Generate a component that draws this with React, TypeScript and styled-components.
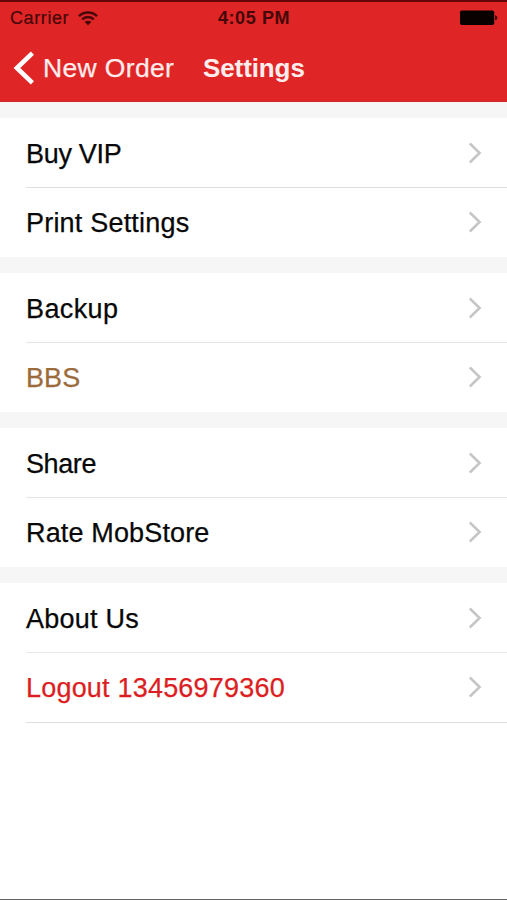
import React from "react";
import styled, { createGlobalStyle } from "styled-components";

const GlobalStyle = createGlobalStyle`
  html, body { margin: 0; padding: 0; background: #fff; }
  * { box-sizing: border-box; }
`;

const Screen = styled.div`
  width: 100%;
  height: 900px;
  display: flex;
  flex-direction: column;
  background: #fff;
  border-bottom: 1px solid #626262;
  font-family: "Liberation Sans", Arial, Helvetica, sans-serif;
  overflow: hidden;
`;

const Header = styled.header`
  flex: none;
  height: 102px;
  background: #df2526;
  border-top: 2px solid #650508;
  border-bottom: 1px solid #cf2829;
`;

const StatusBar = styled.div`
  display: grid;
  grid-template-columns: 1fr auto 1fr;
  align-items: center;
  height: 32px;
  padding: 0 9px 0 10px;
  color: #460709;
  font-size: 18px;
  line-height: 32px;
`;

const Carrier = styled.div`
  display: flex;
  align-items: center;
  gap: 9px;
  letter-spacing: 0.6px;
  -webkit-text-stroke: 0.2px currentColor;
`;

const Clock = styled.time`
  font-weight: 700;
  font-size: 18px;
  letter-spacing: 0.6px;
`;

const BatterySlot = styled.div`
  display: flex;
  justify-content: flex-end;
`;

const NavBar = styled.nav`
  display: flex;
  align-items: center;
  height: 67px;
  padding-left: 13px;
  color: #ffecec;
`;

const BackLink = styled.a`
  display: flex;
  align-items: center;
  gap: 8px;
  width: 190px;
  font-size: 26.5px;
  line-height: 34px;
  letter-spacing: 0.35px;
  -webkit-text-stroke: 0.25px currentColor;
`;

const Title = styled.h1`
  margin: 0;
  font-size: 26px;
  line-height: 34px;
  font-weight: 700;
  letter-spacing: -0.1px;
`;

const Section = styled.section`
  flex: none;
  border-top: 16px solid #f6f6f6;
`;

const Row = styled.div<{ $height: number; $divider?: string }>`
  height: ${(p) => p.$height}px;
  margin-left: 26px;
  padding: 0 25px 0 0;
  display: flex;
  align-items: center;
  justify-content: space-between;
  border-bottom: ${(p) => (p.$divider ? `1px solid ${p.$divider}` : "none")};

  &:first-child > span {
    padding-top: 2px;
  }
  &:last-child > svg {
    margin-bottom: 2px;
  }
`;

const Label = styled.span<{ $color: string; $spacing: number }>`
  color: ${(p) => p.$color};
  font-size: 27px;
  line-height: 34px;
  letter-spacing: ${(p) => p.$spacing}px;
  white-space: nowrap;
  -webkit-text-stroke: 0.25px currentColor;
`;

const Icon = styled.svg`
  display: block;
  flex: none;
`;

const WifiIcon = () => (
  <Icon width="20" height="15" viewBox="0 0 20 15" fill="none" stroke="#460709">
    <path d="M1 5.2C6 .4 14 .4 19 5.2" strokeWidth="2.5" />
    <path d="M4.2 8.4C7.5 5.2 12.5 5.2 15.8 8.4" strokeWidth="2.4" />
    <path d="M6.7 11C8.6 9.2 11.4 9.2 13.3 11L10 14.3Z" fill="#460709" stroke="none" />
  </Icon>
);

const BatteryIcon = () => (
  <Icon width="39" height="16" viewBox="0 0 39 16">
    <rect x="1" y="0.5" width="34.2" height="14.5" rx="1.8" fill="#090000" />
    <path d="M36 5.3Q38.4 5.3 38.4 7.8T36 10.3Z" fill="#460709" />
  </Icon>
);

const BackIcon = () => (
  <Icon width="22" height="34" viewBox="0 0 22 34" fill="none" stroke="#fff" strokeWidth="4.6">
    <path d="M19.4 2.2L3.9 17L19.4 31.8" />
  </Icon>
);

const Disclosure = () => (
  <Icon width="14" height="22" viewBox="0 0 14 22" fill="none" stroke="#c5c5c5" strokeWidth="2.5">
    <path d="M1.8 1.5L11.6 11L1.8 20.5" />
  </Icon>
);

type Item = { label: string; height: number; spacing: number; color?: string; divider?: string };

const sections: Item[][] = [
  [
    { label: "Buy VIP", height: 70, spacing: -0.3, divider: "#dedede" },
    { label: "Print Settings", height: 69, spacing: 0.2 },
  ],
  [
    { label: "Backup", height: 70, spacing: 0.4, divider: "#e5e5e5" },
    { label: "BBS", height: 69, spacing: 0.1, color: "#9c6b3c" },
  ],
  [
    { label: "Share", height: 70, spacing: -0.4, divider: "#e5e5e5" },
    { label: "Rate MobStore", height: 69, spacing: 0.15 },
  ],
  [
    { label: "About Us", height: 70, spacing: 0.25, divider: "#e8e8e8" },
    { label: "Logout 13456979360", height: 70, spacing: 0.2, color: "#dc1e22", divider: "#dedede" },
  ],
];

export default function App() {
  return (
    <>
      <GlobalStyle />
      <Screen>
        <Header>
          <StatusBar>
            <Carrier>
              Carrier
              <WifiIcon />
            </Carrier>
            <Clock>4:05 PM</Clock>
            <BatterySlot>
              <BatteryIcon />
            </BatterySlot>
          </StatusBar>
          <NavBar>
            <BackLink>
              <BackIcon />
              New Order
            </BackLink>
            <Title>Settings</Title>
          </NavBar>
        </Header>
        <main>
          {sections.map((items, i) => (
            <Section key={i}>
              {items.map((item) => (
                <Row key={item.label} $height={item.height} $divider={item.divider}>
                  <Label $color={item.color ?? "#080808"} $spacing={item.spacing}>
                    {item.label}
                  </Label>
                  <Disclosure />
                </Row>
              ))}
            </Section>
          ))}
        </main>
      </Screen>
    </>
  );
}
